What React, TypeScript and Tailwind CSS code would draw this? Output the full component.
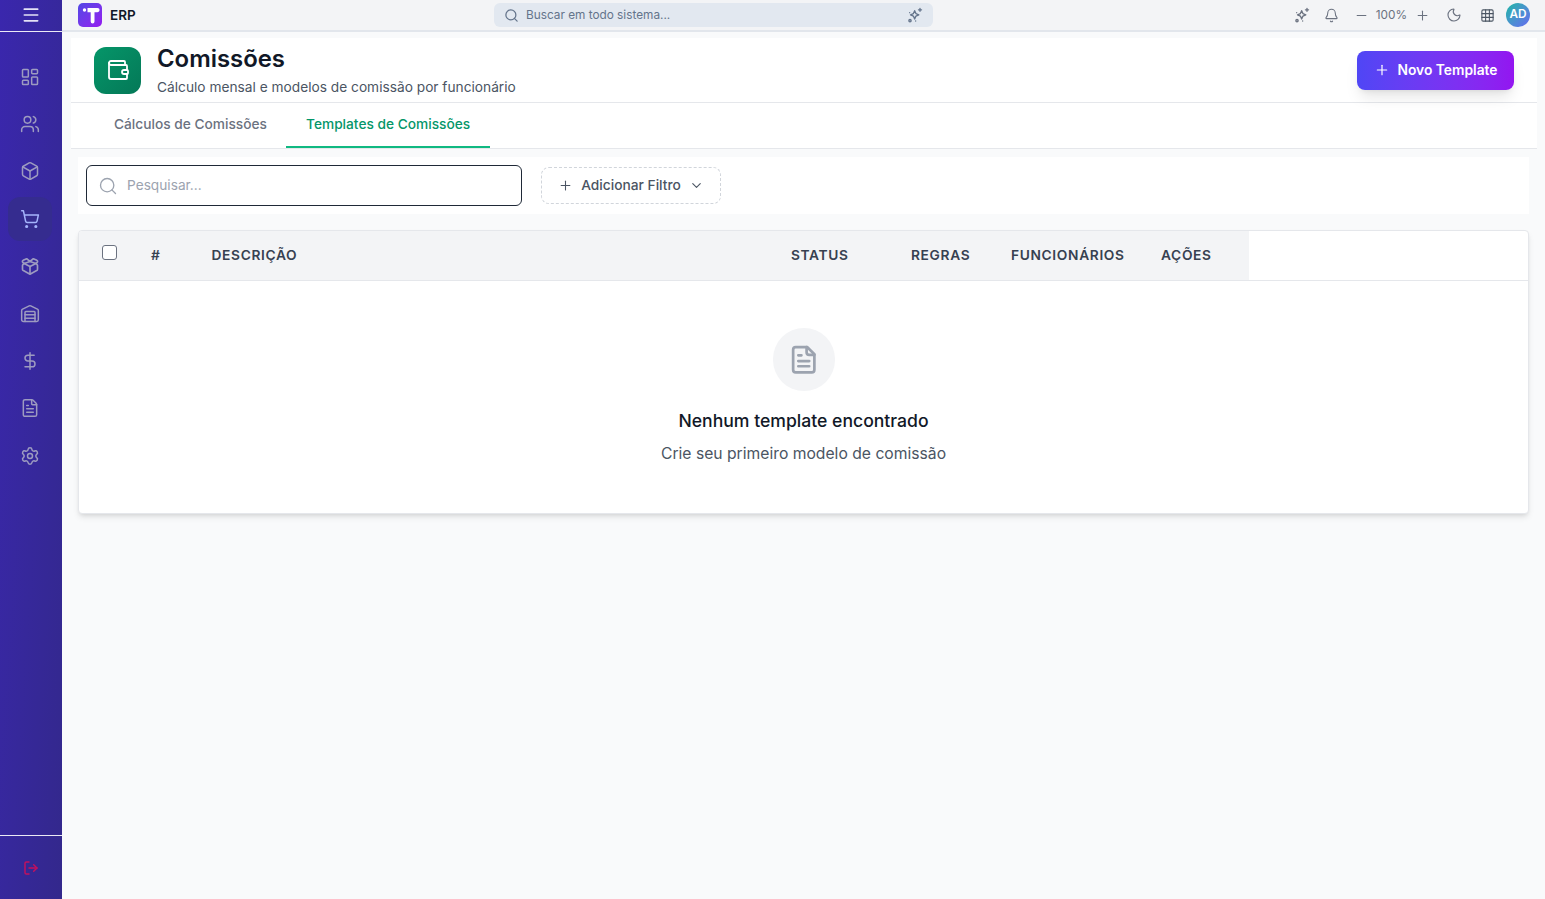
import React from "react";
import {
  Bell,
  Box,
  ChevronDown,
  DollarSign,
  FileText,
  Grid3x3,
  LayoutDashboard,
  LogOut,
  Menu,
  Minus,
  Moon,
  Plus,
  Search,
  Settings,
  ShoppingCart,
  Users,
  Wallet,
  Warehouse,
} from "lucide-react";

function Sparkle({ className }: { className?: string }) {
  return (
    <svg
      viewBox="0 0 24 24"
      fill="none"
      stroke="currentColor"
      strokeWidth="2"
      strokeLinecap="round"
      strokeLinejoin="round"
      className={className}
    >
      <path d="M11.5 5.5l1.9 4.3 4.3 1.9-4.3 1.9-1.9 4.3-1.9-4.3-4.3-1.9 4.3-1.9z" />
      <path d="M19.5 2v4.5M17.2 4.2h4.6" />
      <circle cx="4.5" cy="20.5" r="1.7" />
      <path d="M4 8.5h.01M13 21h.01" />
    </svg>
  );
}

function OpenBox({ className }: { className?: string }) {
  return (
    <svg
      viewBox="0 0 24 24"
      fill="none"
      stroke="currentColor"
      strokeWidth="2"
      strokeLinecap="round"
      strokeLinejoin="round"
      className={className}
    >
      <path d="M12 6.5L8 3.3 3.8 5.2a1.5 1.5 0 0 0-.3 2.6L5 9l7 3.6L19 9l1.5-1.2a1.5 1.5 0 0 0-.3-2.6L16 3.3z" />
      <path d="M5 9l-1.5 1.4A1.5 1.5 0 0 0 3 11.5v4.3a2 2 0 0 0 1 1.7l7 3.8a2 2 0 0 0 2 0l7-3.8a2 2 0 0 0 1-1.7v-4.3a1.5 1.5 0 0 0-.5-1.1L19 9" />
      <path d="M12 12.6V21.8" />
      <path d="M5 9l7-2.5L19 9" />
    </svg>
  );
}

function DocIcon({ className }: { className?: string }) {
  return (
    <svg
      viewBox="0 0 24 28"
      fill="none"
      stroke="currentColor"
      strokeWidth="2.6"
      strokeLinecap="round"
      strokeLinejoin="round"
      className={className}
    >
      <path d="M4.5 2h11L22.5 9v15a2.5 2.5 0 0 1-2.5 2.5H4.5A2.5 2.5 0 0 1 2 24V4.500A2.500 2.500 0 0 1 4.500 2z" />
      <path d="M15 2v5a2.500 2.500 0 0 0 2.500 2.500h5" />
      <path d="M7 10h3M7 15.500h10.500M7 20.500h10.500" />
    </svg>
  );
}

const navIcons = [
  LayoutDashboard,
  Users,
  Box,
  ShoppingCart,
  OpenBox,
  Warehouse,
  DollarSign,
  FileText,
  Settings,
];

function Sidebar() {
  return (
    <aside className="w-[62px] shrink-0 h-[899px] flex flex-col bg-gradient-to-br from-[#3a27ad] to-[#33288c]">
      <div className="h-[32px] shrink-0 border-b border-white/90 flex items-center justify-center pb-[1px]">
        <Menu className="w-[20px] h-[20px] text-[#e4e2f6]" />
      </div>
      <nav className="flex-1 flex flex-col pl-[8px] pt-[22.7px]">
        {navIcons.map((Icon, i) => (
          <div
            key={i}
            className={`w-[44px] h-[44px] mb-[3.4px] rounded-xl flex items-center justify-center ${
              i === 3 ? "bg-[#352c8f]" : ""
            }`}
          >
            <Icon
              strokeWidth={1.8}
              className={`w-[20px] h-[20px] ${
                i === 3 ? "text-[#a5b4fc]" : "text-[#9d9bc0]"
              }`}
            />
          </div>
        ))}
      </nav>
      <div className="h-[64px] shrink-0 border-t border-white/90 flex items-center justify-center">
        <LogOut strokeWidth={2.2} className="w-4 h-4 text-[#c2115e]" />
      </div>
    </aside>
  );
}

function Topbar() {
  return (
    <header className="h-[32px] shrink-0 bg-[#f3f4f6] border-b-2 border-[#e2e6ec] flex items-center pl-[16px] pr-[15px] relative">
      <div className="flex items-center gap-2 w-[416px]">
        <div className="w-6 h-6 rounded-[5px] bg-gradient-to-br from-[#4f46e5] to-[#9315f0] flex items-center justify-center">
          <svg viewBox="0 0 24 24" className="w-6 h-6" fill="#fff">
            <circle cx="6.500" cy="7" r="1.700" />
            <path d="M9.500 5h10a1.500 1.500 0 0 1 0 4.200h-3v9.300a1.900 1.900 0 0 1-3.800 0V9.200H9.500z" />
          </svg>
        </div>
        <span className="text-[13.5px] font-semibold text-[#111827]">ERP</span>
      </div>
      <div className="w-[439px] h-[24px] rounded-md bg-[#e2e8f0] flex items-center pl-[10px] pr-[10px] gap-[7px]">
        <Search className="w-[15px] h-[15px] text-[#64748b]" />
        <span className="flex-1 pt-[1px] text-[11.8px] text-[#64748b]">
          Buscar em todo sistema...
        </span>
        <Sparkle className="w-[16px] h-[16px] text-[#64748b]" />
      </div>
      <div className="ml-auto flex items-center text-[#6b7280]">
        <Sparkle className="w-[16px] h-[16px]" />
        <Bell strokeWidth={1.7} className="w-[15px] h-[15px] ml-[14px]" />
        <Minus strokeWidth={1.7} className="w-[15px] h-[15px] ml-[15px]" />
        <span className="pt-[1px] text-[11.8px] ml-[7px] text-[#6b7280]">100%</span>
        <Plus strokeWidth={1.7} className="w-[15px] h-[15px] ml-[8px]" />
        <Moon strokeWidth={1.7} className="w-[16px] h-[16px] ml-[16px]" />
        <Grid3x3 strokeWidth={1.7} className="w-[15px] h-[15px] ml-[18px] text-[#4b5563]" />
        <div className="w-[24px] h-[24px] ml-[11px] rounded-full bg-gradient-to-br from-[#06b6a4] to-[#6366f1] flex items-center justify-center text-[11.8px] font-semibold text-white">
          AD
        </div>
      </div>
    </header>
  );
}

function PageHeader() {
  return (
    <div className="bg-white ml-[9px] mr-[8px] mt-[6px]">
      <div className="h-[65px] border-b border-[#e5e7eb] flex items-center pl-[23px] pr-[23px]">
        <div className="w-[47px] h-[47px] rounded-xl bg-gradient-to-br from-[#059669] to-[#047857] flex items-center justify-center">
          <Wallet strokeWidth={1.8} className="w-[24px] h-[24px] text-white" />
        </div>
        <div className="ml-4 mt-[2px]">
          <h1 className="text-[23.9px] leading-[28px] font-semibold text-[#111827]">
            Comissões
          </h1>
          <p className="text-[13.72px] leading-[20px] mt-[4px] text-[#4b5563]">
            Cálculo mensal e modelos de comissão por funcionário
          </p>
        </div>
        <button className="ml-auto w-[157px] h-[39px] rounded-lg bg-gradient-to-r from-[#4f46f5] to-[#9315f0] shadow-lg flex items-center justify-center gap-2 text-white text-[13.8px] font-semibold">
          <Plus strokeWidth={1.8} className="w-4 h-4" />
          Novo Template
        </button>
      </div>
      <div className="h-[46px] border-b border-[#e5e7eb] flex pl-[23px]">
        <div className="w-[192px] pl-5 pb-[2px] flex items-center whitespace-nowrap text-[13.72px] font-medium text-[#6b7280]">
          Cálculos de Comissões
        </div>
        <div className="px-5 flex items-center whitespace-nowrap text-[13.72px] font-medium text-[#059669] border-b-2 border-[#10b981]">
          Templates de Comissões
        </div>
      </div>
    </div>
  );
}

function FilterBar() {
  return (
    <div className="mt-[8px] ml-[16px] mr-[16px] h-[57px] bg-white flex items-center pl-[8px] gap-[19px]">
      <div className="w-[436px] h-[41px] rounded-md border border-[#1f2937] flex items-center pl-[11px] gap-[9px]">
        <Search strokeWidth={1.6} className="w-[20px] h-[20px] text-[#9ca3af]" />
        <span className="text-[13.7px] text-[#9ca3af]">Pesquisar...</span>
      </div>
      <button className="w-[180px] h-[37px] rounded-lg border border-dashed border-[#d1d5db] flex items-center justify-center gap-[8px] text-[13.75px] font-medium text-[#4b5563]">
        <Plus strokeWidth={1.7} className="w-[15px] h-[15px]" />
        Adicionar Filtro
        <ChevronDown strokeWidth={1.8} className="w-[15px] h-[15px]" />
      </button>
    </div>
  );
}

function TemplatesTable() {
  const th = "text-[13.75px] font-semibold tracking-[0.65px] text-[#374151]";
  return (
    <div className="mt-[16px] ml-[16px] mr-[16px] h-[284px] bg-white rounded border border-[#e5e7eb] shadow-md overflow-hidden">
      <div className="h-[50px] border-b border-[#e5e7eb] flex">
        <div className="w-[1170px] bg-[#f3f4f6] flex items-center relative">
          <div className="w-[15px] h-[15px] ml-[23px] mb-[6px] rounded-[3px] border border-[#6b7280] bg-white" />
          <span className={`${th} ml-[34px]`}>#</span>
          <span className={`${th} ml-[51px] w-[579.500px]`}>DESCRIÇÃO</span>
          <span className={`${th} w-[120px]`}>STATUS</span>
          <span className={`${th} w-[100px]`}>REGRAS</span>
          <span className={`${th} w-[150px]`}>FUNCIONÁRIOS</span>
          <span className={`${th} absolute left-[1082px]`}>AÇÕES</span>
        </div>
      </div>
      <div className="flex flex-col items-center pt-[47px]">
        <div className="w-[62px] h-[63px] rounded-full bg-[#f3f4f6] flex items-center justify-center">
          <DocIcon className="w-[25px] h-[29px] text-[#9ca3af]" />
        </div>
        <h3 className="mt-[18px] text-[17.6px] leading-[24px] font-medium text-[#111827]">
          Nenhum template encontrado
        </h3>
        <p className="mt-[9px] text-[15.7px] leading-[24px] text-[#4b5563]">
          Crie seu primeiro modelo de comissão
        </p>
      </div>
    </div>
  );
}

export default function App() {
  return (
    <div className="flex w-full h-[899px] overflow-hidden bg-[#f9fafb] font-['Inter',sans-serif]">
      <Sidebar />
      <main className="flex-1 min-w-0 flex flex-col">
        <Topbar />
        <PageHeader />
        <FilterBar />
        <TemplatesTable />
      </main>
    </div>
  );
}
